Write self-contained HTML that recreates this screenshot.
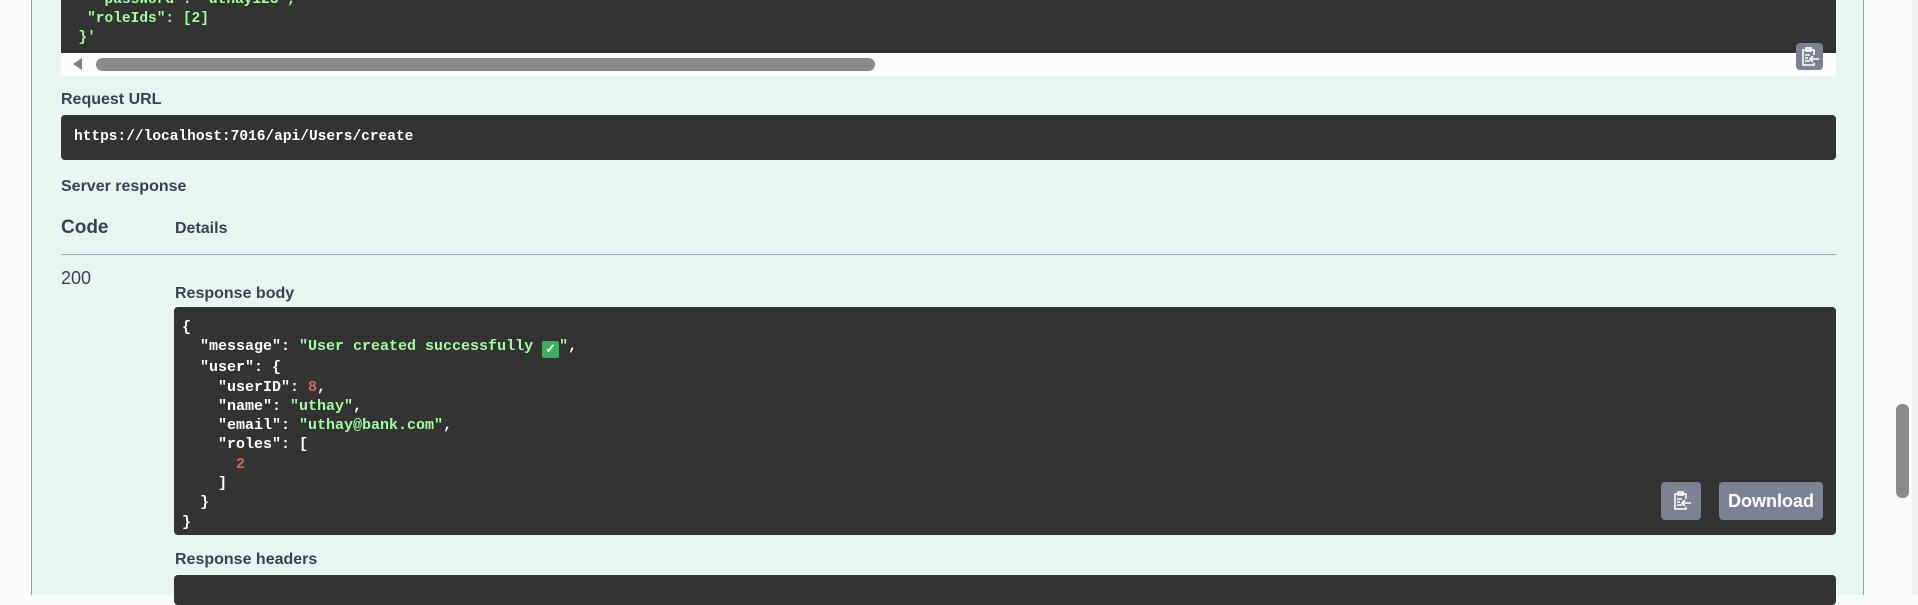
<!DOCTYPE html>
<html><head><meta charset="utf-8"><style>
*{margin:0;padding:0;box-sizing:border-box}
body{width:1918px;height:595px;overflow:hidden;background:#fafafa;position:relative;font-family:"Liberation Sans",sans-serif;color:#3b4151}
.panel{position:absolute;left:31px;top:0;width:1833px;height:595px;background:#e8f6f0;border-left:1px solid #49cc90;border-right:1px solid #49cc90}
.abs{position:absolute}
.code{background:#333;color:#fff;font-family:"Liberation Mono",monospace;font-weight:bold;border-radius:4px}
.lbl{font-weight:bold;font-size:16px}
.g{color:#a2fca2}.r{color:#d36363}
.btn{background:#7d8293;border-radius:4px;color:#fff}
</style></head><body>
<div class="panel"></div>
<div class="abs code" style="left:61px;top:0;width:1775px;height:53px;border-radius:0"></div>
<div class="abs" style="left:61px;top:-9px;font-family:'Liberation Mono',monospace;font-weight:bold;font-size:14.5px;line-height:19px;color:#a2fca2;white-space:pre">    "password": "uthay123",
   "roleIds": [2]
  }'</div>
<div class="abs" style="left:61px;top:53px;width:1775px;height:23px;background:#fcfcfc"></div>
<div class="abs" style="left:73px;top:58px;width:0;height:0;border-top:6px solid transparent;border-bottom:6px solid transparent;border-right:9px solid #808080"></div>
<div class="abs" style="left:96px;top:58px;width:779px;height:13px;background:#8a8a8a;border-radius:7px"></div>
<div class="abs btn" style="left:1796px;top:43px;width:27px;height:27px;border-radius:4px">
<svg width="27" height="27" viewBox="0 0 27 27"><g fill="none" stroke="#fff" stroke-width="1.6"><path d="M18 12V7H7v15h11v-2"/><rect x="10" y="5" width="5" height="3"/><path d="M9 12h5M9 15h3M9 18h5M14 16h9M17 13l-3 3 3 3"/></g></svg></div>
<div class="abs lbl" style="left:61px;top:91px">Request URL</div>
<div class="abs code" style="left:61px;top:115px;width:1775px;height:45px;font-size:14.5px;padding:14px 0 0 13px">https://localhost:7016/api/Users/create</div>
<div class="abs lbl" style="left:61px;top:178px">Server response</div>
<div class="abs" style="left:61px;top:217px;font-size:19px;font-weight:bold">Code</div>
<div class="abs lbl" style="left:175px;top:220px">Details</div>
<div class="abs" style="left:61px;top:254px;width:1775px;height:1px;background:#a4aeb3"></div>
<div class="abs" style="left:61px;top:268px;font-size:18px">200</div>
<div class="abs lbl" style="left:175px;top:285px">Response body</div>
<div class="abs code" style="left:174px;top:307px;width:1662px;height:228px"></div>
<div class="abs" style="left:182px;top:318px;font-family:'Liberation Mono',monospace;font-weight:bold;font-size:15px;line-height:19.3px;color:#fff;white-space:pre">{
  "message": <span class="g">"User created successfully <span style="display:inline-block;width:17px;height:17px;background:#3fae5c;border-radius:2px;vertical-align:-3px;color:#fff;font-size:13px;line-height:17px;text-align:center">✓</span>"</span>,
  "user": {
    "userID": <span class="r">8</span>,
    "name": <span class="g">"uthay"</span>,
    "email": <span class="g">"uthay@bank.com"</span>,
    "roles": [
      <span class="r">2</span>
    ]
  }
}</div>
<div class="abs btn" style="left:1661px;top:482px;width:40px;height:38px">
<svg width="40" height="38" viewBox="0 0 40 38"><g fill="none" stroke="#fff" stroke-width="1.6"><path d="M25 17v-5H14v15h11v-2"/><rect x="17" y="10" width="5" height="3"/><path d="M16 17h5M16 20h3M16 23h5M21 21h9M24 18l-3 3 3 3"/></g></svg></div>
<div class="abs btn" style="left:1719px;top:482px;width:104px;height:38px;font-weight:bold;font-size:18px;text-align:center;line-height:38px">Download</div>
<div class="abs lbl" style="left:175px;top:551px">Response headers</div>
<div class="abs code" style="left:174px;top:575px;width:1662px;height:30px"></div>
<div class="abs" style="left:1912px;top:0;width:6px;height:595px;background:#f0f0f0"></div>
<div class="abs" style="left:1896px;top:404px;width:13px;height:94px;background:#8a8a8a;border-radius:6px"></div>
</body></html>
